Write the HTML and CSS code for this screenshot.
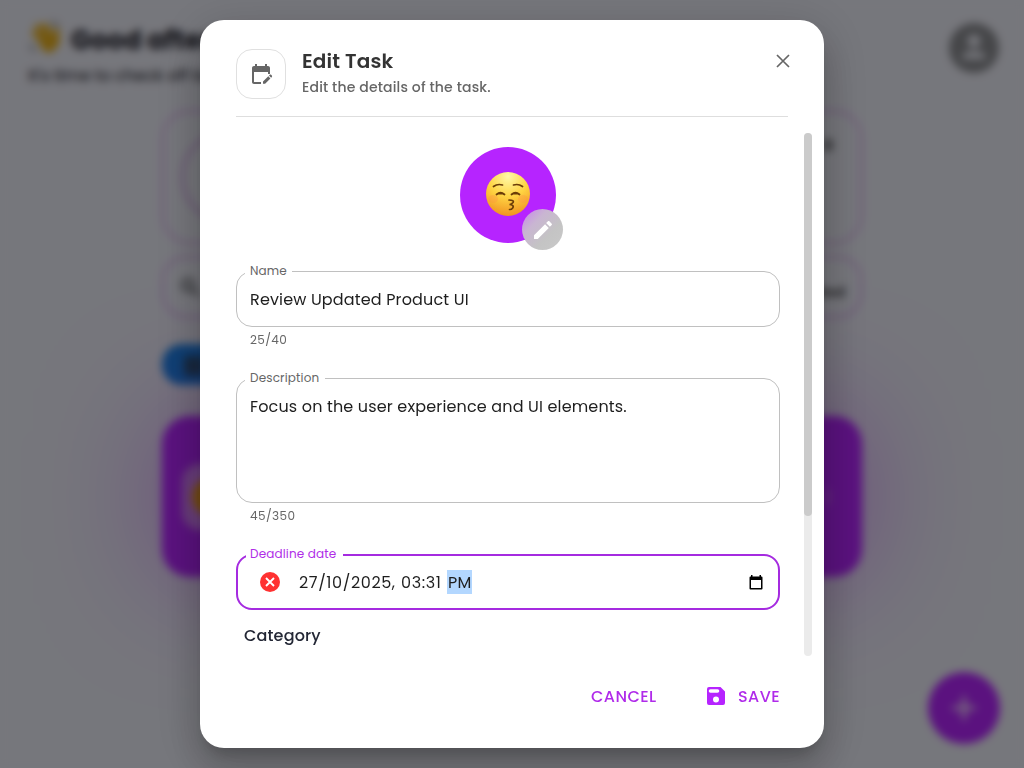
FILE: index.html
```html
<!DOCTYPE html>
<html lang="en">
<head>
<meta charset="utf-8">
<title>Edit Task</title>
<link rel="stylesheet" href="styles.css">
</head>
<body>
<div class="page">
  <header class="greeting">
    <div>
      <h1 class="greeting-title">
        <svg class="wave" viewBox="0 0 32 32"><g fill="none" stroke="#e9b01f" stroke-linecap="round" stroke-width="5"><path d="M6 12l10 12M9 6l11 14M16 5l8 14M27 10l0 12"/></g><path d="M9 17l14-4 6 1v9l-7 8-8-2z" fill="#e9b01f"/><path d="M22 2q5 1 6 5M2 23q1 4 5 6" fill="none" stroke="#777" stroke-width="2"/></svg>
        <span>Good afternoon</span>
      </h1>
      <p class="greeting-sub">It's time to check off tasks</p>
    </div>
    <svg class="avatar" viewBox="0 0 50 50"><circle cx="25" cy="25" r="25" fill="#8c8d92"/><circle cx="25" cy="18" r="6.5" fill="#edeef8"/><path d="M13 36c0-6 7-8 12-8s12 2 12 8z" fill="#edeef8"/></svg>
  </header>
  <main class="board">
    <section class="progress"><span class="ring"></span><span class="dot"></span></section>
    <section class="search">
      <svg width="20" height="20" viewBox="0 0 20 20" fill="none" stroke="#66676b" stroke-width="3"><circle cx="8" cy="8" r="5.5"/><path d="M12 12l7 7"/></svg>
      <span>Created</span>
    </section>
    <span class="chip"><i></i></span>
    <section class="task"><span class="task-emoji"><i></i></span><span class="task-menu"></span></section>
  </main>
  <div class="fab"><svg width="30" height="30" viewBox="0 0 30 30"><path d="M15 3v24M3 15h24" stroke="#fff" stroke-width="3"/></svg></div>
</div>

<div class="backdrop">
  <div class="dialog">
    <header class="dialog-head">
      <div class="head-icon">
        <svg width="24" height="24" viewBox="0 0 24 24" fill="#666"><path d="M5 10h14v2h2V6c0-1.100-.9-2-2-2h-1V2h-2v2H8V2H6v2H5c-1.110 0-1.990.9-1.990 2L3 20c0 1.100.89 2 2 2h7v-2H5V10z"/><path d="M22.840 14.990l-.71.710-2.120-2.120.71-.71c.39-.39 1.020-.39 1.410 0l.71.710c.39.390.39 1.020 0 1.410zM19.300 14.290l2.120 2.120-5.300 5.300H14v-2.120z"/></svg>
      </div>
      <div class="head-text">
        <h2 class="title">Edit Task</h2>
        <p class="subtitle">Edit the details of the task.</p>
      </div>
      <svg class="close" viewBox="0 0 14 14"><path d="M1 1l12 12M13 1L1 13" stroke="#666" stroke-width="1.700"/></svg>
    </header>
    <div class="dialog-body">
      <div class="content">
        <div class="emoji-pick">
          <svg class="kiss" width="44" height="44" viewBox="0 0 44 44">
            <defs><radialGradient id="face" cx=".5" cy=".1" r=".92"><stop offset="0" stop-color="#fff9a8"/><stop offset=".5" stop-color="#ffd442"/><stop offset="1" stop-color="#f09020"/></radialGradient></defs>
            <circle cx="22" cy="22" r="22" fill="url(#face)"/>
            <ellipse cx="7" cy="27" rx="5" ry="4" fill="#ff8f45" opacity=".3"/><ellipse cx="37" cy="27" rx="5" ry="4" fill="#ff8f45" opacity=".3"/>
            <g fill="none" stroke="#6b3d08" stroke-width="1.700" stroke-linecap="round"><path d="M7.500 14.500q4-3 9-1.500M27.500 13q5-1.500 9 1.500"/><path d="M10.500 22.500q4-3.500 8 0M25.500 22.500q4-3.500 8 0M12 21.700h5M27 21.700h5"/><path d="M23 28q5.500 0 4 2.500-1.500 2-3.500 2 5 .5 3.200 3.500-1.300 1.700-3.200 1.500"/></g>
          </svg>
          <span class="edit-badge"><svg width="24" height="24" viewBox="0 0 24 24" fill="#fff"><path d="M3 17.250V21h3.750L17.810 9.940l-3.750-3.750L3 17.250zM20.710 7.040c.39-.39.39-1.020 0-1.410l-2.340-2.340c-.39-.39-1.020-.39-1.410 0l-1.830 1.830 3.750 3.750 1.830-1.830z"/></svg></span>
        </div>
        <div class="field"><label class="label label-name">Name</label><span class="value">Review Updated Product UI</span></div>
        <p class="helper">25/40</p>
        <div class="field field-area"><label class="label label-desc">Description</label><span class="value">Focus on the user experience and UI elements.</span></div>
        <p class="helper">45/350</p>
        <div class="field field-focus">
          <label class="label label-date">Deadline date</label>
          <svg class="clear" width="20" height="20" viewBox="0 0 20 20"><circle cx="10" cy="10" r="10" fill="#ff3131"/><path d="M6 6l8 8M14 6l-8 8" stroke="#fff" stroke-width="1.900"/></svg>
          <span class="value v-date">27/10/2025,</span><span class="value v-time">03:31</span><span class="value v-pm">PM</span>
          <svg class="picker" width="14" height="15" viewBox="0 0 14 15"><path d="M2 0h1.500v1.500h7V0H12v1.500h.5Q13.500 1.500 13.500 2.500v11q0 1-1 1h-11q-1 0-1-1v-11q0-1 1-1H2zM2 5v8h10V5z" fill="#000" fill-rule="evenodd"/></svg>
        </div>
        <p class="category">Category</p>
      </div>
      <div class="track"><div class="thumb"></div></div>
    </div>
    <footer class="actions">
      <span class="btn btn-cancel">CANCEL</span>
      <span class="btn btn-save"><svg width="20" height="20" viewBox="0 0 20 20"><path d="M3 1h11.500L19 5.500V17q0 2-2 2H3q-2 0-2-2V3q0-2 2-2zM4.500 3.200a1.800 1.800 0 0 0 0 3.600h7a1.800 1.800 0 0 0 0-3.600zM10 10.500a3 3 0 1 0 0 6 3 3 0 0 0 0-6z" fill="#b624ff" fill-rule="evenodd"/></svg><span class="save-text">SAVE</span></span>
    </footer>
  </div>
</div>
</body>
</html>
```
FILE: styles.css
```css
* { box-sizing: border-box; }
body, h1, h2, p { margin: 0; }
body { font-family: Poppins, Inter, "Noto Sans", sans-serif; background: #edeef8; overflow: hidden; }
.page { height: 768px; overflow: hidden; position: relative; background: #edeef8; color: #1c1c28; }
.greeting { height: 110px; padding: 19px 25px 0 28px; display: flex; justify-content: space-between; }
.greeting-title { display: flex; align-items: center; gap: 9px; height: 42px; font-size: 26px; font-weight: 700; white-space: nowrap; }
.wave { width: 34px; height: 34px; margin-top: -6px; }
.greeting-sub { font-size: 16px; font-weight: 500; line-height: 24px; margin-top: 3px; color: #3a3a44; white-space: nowrap; }
.avatar { width: 50px; height: 50px; margin-top: 4px; }
.board { width: 700px; margin: 0 auto; display: flex; flex-direction: column; align-items: stretch; }
.progress { height: 134px; border: 2px solid #d9a0f4; border-radius: 28px; padding: 19px 27px 0 17px; display: flex; justify-content: space-between; }
.ring { width: 92px; height: 92px; border: 3px solid #d3a5ea; border-radius: 50%; }
.dot { width: 10px; height: 12px; margin-top: 8px; border-radius: 4px; background: #85858a; }
.search { height: 62px; margin-top: 12px; border: 2px solid #d9a0f4; border-radius: 24px; padding: 0 15px 0 16px; display: flex; align-items: center; justify-content: space-between; }
.search span { font-size: 14px; font-weight: 600; padding-top: 10px; color: #444; }
.chip { width: 130px; height: 41px; margin-top: 26px; border-radius: 20px; background: #1a84ea; padding: 12px 22px; }
.chip i { display: block; width: 20px; height: 20px; border-radius: 4px; background: #285477; }
.task { height: 161px; margin-top: 31px; border-radius: 28px; background: #b624ff; box-shadow: 0 0 128px -12px #b624ffa0; padding: 0 32px 0 20px; display: flex; align-items: center; justify-content: space-between; }
.task-emoji { width: 66px; height: 66px; border-radius: 18px; background: #d27bf7; padding: 14px 10px; }
.task-emoji i { display: block; width: 38px; height: 38px; border-radius: 50%; background: #e9961c; }
.task-menu { width: 4px; height: 18px; background: #c45af5; border-radius: 3px; }
.fab { position: absolute; right: 24px; bottom: 24px; width: 72px; height: 72px; border-radius: 50%; background: #b624ff; display: grid; place-items: center; }
.backdrop { position: fixed; inset: 0; display: flex; align-items: center; justify-content: center; background: rgba(0,0,0,.5); backdrop-filter: blur(4px); }
.dialog { width: 624px; height: 728px; border-radius: 24px; background: #fff; display: flex; flex-direction: column; box-shadow: 0 11px 15px -7px rgba(0,0,0,.2), 0 24px 38px 3px rgba(0,0,0,.14), 0 9px 46px 8px rgba(0,0,0,.12); }
.dialog-head { height: 97px; margin: 0 36px; padding-top: 29px; border-bottom: 1px solid #dedede; display: flex; }
.head-icon { width: 50px; height: 50px; border: 1px solid #e0e0e0; border-radius: 16px; display: grid; place-items: center; }
.head-text { margin-left: 16px; flex: 1; white-space: nowrap; }
.title { font-size: 20px; font-weight: 600; line-height: 24px; color: #333; letter-spacing: .15px; }
.subtitle { margin-top: 3px; font-size: 14px; font-weight: 500; line-height: 22px; color: #666; letter-spacing: .15px; }
.close { width: 14px; height: 14px; margin: 5px -2px 0 0; }
.dialog-body { height: 523px; margin: 16px 12px 0 36px; display: flex; gap: 24px; }
.content { width: 544px; padding-top: 14px; display: flex; flex-direction: column; }
.track { width: 8px; height: 523px; border-radius: 4px; background: #ebebeb; }
.thumb { height: 383px; border-radius: 4px; background: #cbcbcb; }
.emoji-pick { position: relative; width: 96px; height: 96px; align-self: center; margin-bottom: 28px; border-radius: 50%; background: #b624ff; display: grid; place-items: center; }
.kiss { margin-bottom: 2px; }
.edit-badge { position: absolute; left: 62px; top: 62px; width: 41px; height: 41px; border-radius: 50%; display: grid; place-items: center; background: linear-gradient(135deg, #c883ee 0%, #c9b5d2 32%, #c4c4c4 65%, #c9c9c9 100%); }
.field { position: relative; height: 56px; border: 1px solid #c0c0c0; border-radius: 16px; padding: 15px 13px; white-space: nowrap; }
.value { display: inline-block; font-size: 16px; line-height: 24px; color: #1e1e1e; letter-spacing: .15px; }
.label { position: absolute; left: 8px; top: -10px; height: 18px; padding-left: 5px; font-size: 12px; line-height: 17px; letter-spacing: .15px; color: #666; background: #fff; }
.label-name { width: 47px; }
.label-desc { width: 80px; }
.helper { height: 51px; padding: 4px 14px 0; font-size: 12px; line-height: 18px; letter-spacing: .4px; color: #666; }
.field-area { height: 125px; }
.field-focus { border: 2px solid #a52be0; padding: 0 15px 0 22px; display: flex; align-items: center; }
.label-date { left: 8px; top: -11px; padding-left: 4px; width: 97px; color: #b02de8; }
.field-focus .value { line-height: 25px; height: 24px; }
.v-date { width: 102px; margin-left: 19px; letter-spacing: .6px; }
.field-focus .v-time { width: 46px; letter-spacing: .6px; }
.v-pm { width: 25px; padding-left: 1px; background: #b3d7ff; }
.field-focus .v-date { letter-spacing: .6px; }
.picker { margin-left: auto; }
.category { padding: 14px 8px 0; font-size: 16px; line-height: 24px; font-weight: 500; letter-spacing: .15px; color: #232735; }
.actions { height: 92px; padding: 0 44px 10px; display: flex; justify-content: flex-end; align-items: center; gap: 50px; }
.btn { display: flex; align-items: center; font-size: 16px; font-weight: 500; line-height: 24px; letter-spacing: .46px; color: #b02bea; }
.btn-cancel { width: 66px; }
.btn-save { gap: 11px; }
.btn-save svg { margin: -2px 1px 0 -1px; }
.save-text { width: 42px; }
```
